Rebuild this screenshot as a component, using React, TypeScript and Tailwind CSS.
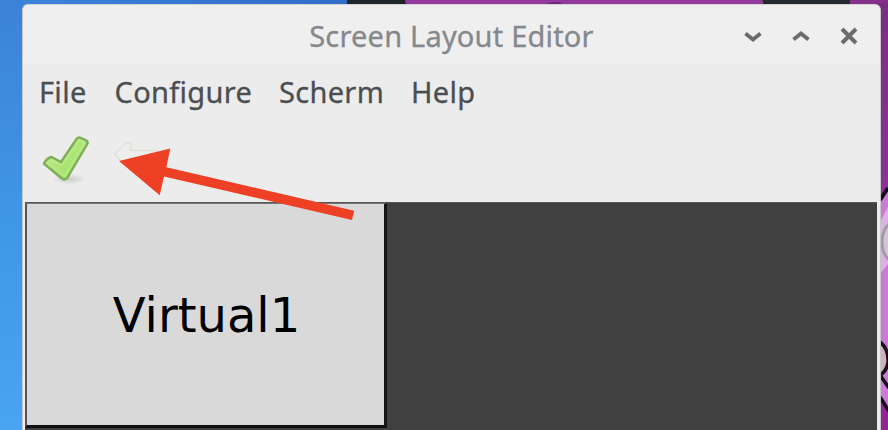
import React from "react";

function Wallpaper() {
  return (
    <svg className="absolute inset-0" width="888" height="430" viewBox="0 0 888 430" aria-hidden="true">
      <defs>
        <linearGradient id="sky" x1="0" y1="0" x2="0" y2="1">
          <stop offset="0" stopColor="#3c82d8" />
          <stop offset="0.5" stopColor="#4096e6" />
          <stop offset="1" stopColor="#49a4f3" />
        </linearGradient>
        <linearGradient id="skyTop" x1="0" y1="0" x2="1" y2="0">
          <stop offset="0" stopColor="#3b83d9" />
          <stop offset="1" stopColor="#306dcb" />
        </linearGradient>
        <linearGradient id="plum" x1="0" y1="0" x2="0" y2="1">
          <stop offset="0" stopColor="#7c2d84" />
          <stop offset="1" stopColor="#8f3297" />
        </linearGradient>
      </defs>
      <rect width="30" height="430" fill="url(#sky)" />
      <rect x="20" width="328" height="8" fill="url(#skyTop)" />
      <rect x="347" width="60" height="8" fill="#22262b" />
      <path d="M405 0H762L764 8H407Z" fill="#93389e" />
      <path d="M548 3Q555 1 562 3V8H548Z" fill="#6c2877" />
      <path d="M762 0H851V8H764Z" fill="#25282d" />
      <path d="M850 0H888V10H850Z" fill="#853089" />
      <rect x="876" y="3" width="12" height="200" fill="url(#plum)" />
      <path d="M880 202L888 189V430H880Z" fill="#cb7bd5" />
      <path d="M880 222L888 207V264L880 274Z" fill="#dfb0e4" />
      <path d="M880 200L888 188" stroke="#160819" strokeWidth="4" />
      <path d="M890 223Q882 230 882 242Q882 255 890 260" fill="#d5c4d8" stroke="#a797aa" strokeWidth="3" />
      <path d="M880 344Q889 350 888 364Q887 371 881 374Z" fill="#d7aebc" />
      <path d="M880 342Q889 349 888 363Q886 372 880 375L889 388" fill="none" stroke="#190c1c" strokeWidth="3.5" />
      <path d="M880 398L888 410V430H880Z" fill="#902795" />
      <path d="M880 397L889 411" stroke="#190c1c" strokeWidth="3.5" />
    </svg>
  );
}

function TitleBar() {
  return (
    <header className="relative flex h-[59px] items-center justify-center rounded-t-[5px] bg-[#efefef]">
      <h1 className="mt-[3px] whitespace-nowrap text-[29px] leading-[40px] tracking-[0.2px] text-[#85888c] [-webkit-text-stroke:0.3px]">Screen Layout Editor</h1>
      <div className="absolute right-[19px] top-[19px] flex gap-6 text-[#6c6c6c]">
        {["M4.5 9.5L12 15.5L19.5 9.5", "M4.5 15.5L12 9.5L19.5 15.5", "M5 5L19 19M19 5L5 19"].map((d) => (
          <svg key={d} width="24" height="24" viewBox="0 0 24 24" fill="none" stroke="currentColor" strokeWidth="4">
            <path d={d} />
          </svg>
        ))}
      </div>
    </header>
  );
}

function MenuBar() {
  return (
    <nav className="flex h-[58px] items-center gap-[27px] pb-[3px] pl-[16px] text-[29px] leading-[40px] tracking-[0.3px] text-[#4b4e51] [-webkit-text-stroke:0.3px]">
      <span className="mr-px">File</span>
      <span>Configure</span>
      <span>Scherm</span>
      <span>Help</span>
    </nav>
  );
}

function Toolbar() {
  return (
    <div className="flex h-[80px] items-start pl-[15px] pt-[8px]">
      <svg width="56" height="56" viewBox="38 129 56 56">
        <defs>
          <radialGradient id="shade">
            <stop offset="0" stopColor="#aaaaaa" stopOpacity="0.5" />
            <stop offset="1" stopColor="#aaaaaa" stopOpacity="0" />
          </radialGradient>
          <linearGradient id="leaf" x1="0" y1="0" x2="1" y2="1">
            <stop offset="0" stopColor="#c2f09b" />
            <stop offset="1" stopColor="#9bdc59" />
          </linearGradient>
        </defs>
        <ellipse cx="69" cy="178" rx="17" ry="5.5" fill="url(#shade)" />
        <path d="M43.8 162.5Q47 157 51.5 156L61 161L76.5 138Q78 135.8 81 137L86.5 139.5Q88.5 141 87 143.5L67.5 176.5Q65 179.8 62 177.5Z" fill="url(#leaf)" stroke="#80ad58" strokeWidth="2.4" strokeLinejoin="round" />
        <path d="M46.7 162.5Q49 159.5 51.7 159L62 164.5L78.5 139.5L84.5 142L64.5 175Z" fill="none" stroke="#b6ec85" strokeWidth="1.5" strokeLinejoin="round" />
      </svg>
      <svg className="ml-[17px]" width="48" height="44" viewBox="111 130 48 44">
        <path d="M114.5 154L125.5 143.5Q128 141.5 131 143.5Q132 145 130 150.5H157V159H130V165Q127 167 124 164Z" fill="#edeeeb" stroke="#dddfd9" strokeWidth="1.4" strokeLinejoin="round" />
      </svg>
    </div>
  );
}

function LayoutCanvas() {
  return (
    <main className="ml-[2px] mr-[3px] flex h-[229px] items-start border-t border-[#555555] bg-[#404040]">
      <div className="flex h-[225px] w-[362px] items-center justify-center border-b-[3px] border-l-2 border-r-[3px] border-t border-b-[#101010] border-l-[#555555] border-r-[#151515] border-t-[#777777] bg-[#d9d9d9] font-['DejaVu_Sans',sans-serif] text-[48px] text-black">
        <span className="ml-[2px]">Virtual1</span>
      </div>
    </main>
  );
}

export default function App() {
  return (
    <div className="relative h-[430px] w-[888px] overflow-hidden font-['Noto_Sans',sans-serif]">
      <Wallpaper />
      <section className="absolute left-[22px] top-[4px] h-[440px] w-[859px] rounded-t-[6px] border-x border-t border-x-[#c5c6c7] border-t-[#d2d2d2] bg-[#ececec]">
        <TitleBar />
        <MenuBar />
        <Toolbar />
        <LayoutCanvas />
      </section>
      <svg className="absolute left-0 top-0" width="888" height="430" viewBox="0 0 888 430" aria-label="Arrow pointing to toolbar">
        <path d="M119 161L170.3 148.5L166.3 167.3L354.2 210.7L352 220L164 176.5L159.7 195.3Z" fill="#ed4025" />
      </svg>
    </div>
  );
}
